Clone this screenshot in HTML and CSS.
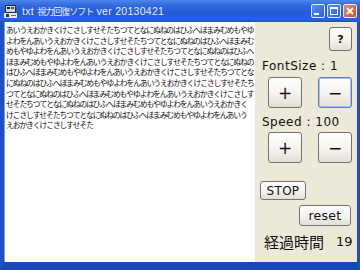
FILE: index.html
```html
<!DOCTYPE html>
<html lang="ja">
<head>
<meta charset="utf-8">
<title>txt 視力回復ソフト</title>
<link rel="stylesheet" href="styles.css">
</head>
<body>
<div class="window">
  <div class="titlebar">
    <svg class="appicon" width="14" height="15" viewBox="0 0 14 15">
      <rect x="1" y="1" width="11" height="8" fill="#2b2b2b"/>
      <rect x="2" y="2" width="9" height="6" fill="#c8d4e8"/>
      <rect x="3" y="3" width="3" height="2" fill="#222"/>
      <rect x="7" y="3" width="3" height="2" fill="#555"/>
      <rect x="0" y="9" width="13" height="5" fill="#e8e8e8"/>
      <rect x="2" y="10" width="3" height="3" fill="#333"/>
      <rect x="7" y="11" width="5" height="1" fill="#666"/>
    </svg>
    <span class="title">txt <span class="title-jp">視力回復ソフト</span> ver 20130421</span>
    <div class="controls">
      <span class="ctl ctl-min"><svg width="14" height="14" viewBox="0 0 14 14"><rect x="3" y="9" width="5" height="2" fill="#fff"/></svg></span>
      <span class="ctl ctl-max"><svg width="14" height="14" viewBox="0 0 14 14"><rect x="3.5" y="3.5" width="7" height="7" fill="none" stroke="#fff" stroke-width="1"/><rect x="3" y="3" width="8" height="2" fill="#fff"/></svg></span>
      <span class="ctl ctl-close"><svg width="14" height="14" viewBox="0 0 14 14"><path d="M4 4 L10 10 M10 4 L4 10" stroke="#fff" stroke-width="1.8"/></svg></span>
    </div>
  </div>
  <div class="frame">
    <div class="textbox">あいうえおかきくけこさしすせそたちつてとなにぬねのはひふへほまみむめもやゆ<br>よわをんあいうえおかきくけこさしすせそたちつてとなにぬねのはひふへほまみむ<br>めもやゆよわをんあいうえおかきくけこさしすせそたちつてとなにぬねのはひふへ<br>ほまみむめもやゆよわをんあいうえおかきくけこさしすせそたちつてとなにぬねの<br>はひふへほまみむめもやゆよわをんあいうえおかきくけこさしすせそたちつてとな<br>にぬねのはひふへほまみむめもやゆよわをんあいうえおかきくけこさしすせそたち<br>つてとなにぬねのはひふへほまみむめもやゆよわをんあいうえおかきくけこさしす<br>せそたちつてとなにぬねのはひふへほまみむめもやゆよわをんあいうえおかきく<br>けこさしすせそたちつてとなにぬねのはひふへほまみむめもやゆよわをんあいう<br>えおかきくけこさしすせそた</div>
    <div class="panel">
      <button class="btn btn-help">?</button>
      <div class="label label-font">FontSize : 1</div>
      <div class="pair pair-font">
        <button class="btn btn-sq">+</button>
        <button class="btn btn-sq btn-focus">−</button>
      </div>
      <div class="label label-speed">Speed : 100</div>
      <div class="pair pair-speed">
        <button class="btn btn-sq">+</button>
        <button class="btn btn-sq">−</button>
      </div>
      <button class="btn btn-stop">STOP</button>
      <button class="btn btn-reset">reset</button>
      <div class="elapsed"><span class="elapsed-jp">経過時間</span><span class="elapsed-num">19</span></div>
    </div>
  </div>
</div>
</body>
</html>
```

FILE: styles.css
```css
html, body {
  margin: 0;
  padding: 0;
}
body {
  width: 360px;
  height: 270px;
  overflow: hidden;
  background: #1a4cc4;
}
.window {
  width: 360px;
  height: 270px;
  display: flex;
  flex-direction: column;
}
.titlebar {
  height: 22px;
  flex: none;
  display: flex;
  align-items: center;
  background: linear-gradient(#4c86ea 0%, #2f69e0 25%, #2459d6 60%, #2a62dc 88%, #1e50c8 100%);
}
.appicon {
  margin-left: 4px;
  flex: none;
}
.title {
  margin-left: 4px;
  color: #e9eefa;
  font-family: "Liberation Sans", "Noto Sans CJK JP", sans-serif;
  font-size: 10.5px;
  letter-spacing: 0.3px;
}
.title-jp {
  font-family: "Noto Sans CJK JP", sans-serif;
  font-size: 9px;
  letter-spacing: -1px;
}
.controls {
  margin-left: auto;
  margin-right: 3px;
  display: flex;
  gap: 2px;
}
.ctl {
  width: 14px;
  height: 14px;
  border: 1px solid #e6ecfa;
  border-radius: 2px;
  box-sizing: border-box;
  display: flex;
  align-items: center;
  justify-content: center;
  background: linear-gradient(135deg, #5a8ef0, #2a62e0);
}
.ctl svg {
  flex: none;
}
.ctl-close {
  background: linear-gradient(135deg, #e88a6a, #d2502e);
}
.frame {
  flex: 1;
  display: flex;
  border-left: 4px solid #1f4fc0;
  border-right: 3px solid #1f4fc0;
  border-bottom: 8px solid #1848bc;
  min-height: 0;
}
.textbox {
  width: 251px;
  flex: none;
  background: #fff;
  border-left: 1px solid #7f9cd8;
  box-sizing: border-box;
  padding: 3px 0 0 1px;
  font-family: "Noto Sans CJK JP", sans-serif;
  font-size: 7.8px;
  letter-spacing: -1.1px;
  line-height: 10.6px;
  color: #111;
  white-space: nowrap;
  overflow: hidden;
}
.panel {
  flex: 1;
  background: #ece9d8;
  display: flex;
  flex-direction: column;
  align-items: flex-start;
  font-family: "DejaVu Sans", sans-serif;
  color: #111;
}
.btn {
  font-family: "DejaVu Sans", sans-serif;
  color: #111;
  border: 1px solid #6f7478;
  border-radius: 3px;
  background: linear-gradient(#ffffff, #f4f3ee 55%, #e2ded3);
  padding: 0;
  box-sizing: border-box;
  display: flex;
  align-items: center;
  justify-content: center;
}
.btn-help {
  align-self: flex-end;
  margin: 5px 5px 0 0;
  width: 23px;
  height: 24px;
  font-size: 11px;
  font-weight: bold;
}
.label {
  margin-left: 7px;
  font-size: 12px;
  letter-spacing: 0.5px;
  line-height: 14px;
}
.label-font {
  margin-top: 8px;
}
.label-speed {
  margin-top: 7px;
}
.pair {
  display: flex;
  gap: 16px;
  margin-left: 13px;
}
.pair-font {
  margin-top: 4px;
}
.pair-speed {
  margin-top: 3px;
}
.btn-sq {
  width: 34px;
  height: 31px;
  font-size: 17px;
}
.btn-focus {
  border-color: #5b7fc4;
  box-shadow: inset 0 0 0 1px #a8c2ec;
}
.btn-stop {
  margin: 18px 0 0 5px;
  width: 46px;
  height: 19px;
  font-size: 12px;
  letter-spacing: 0.3px;
}
.btn-reset {
  margin: 5px 0 0 44px;
  width: 52px;
  height: 21px;
  font-size: 12.5px;
  letter-spacing: 0.3px;
}
.elapsed {
  margin: 7px 0 0 9px;
  display: flex;
  align-items: center;
  line-height: 18px;
}
.elapsed-jp {
  font-family: "Noto Sans CJK JP", sans-serif;
  font-size: 15px;
}
.elapsed-num {
  margin-left: 12px;
  font-family: "DejaVu Sans", sans-serif;
  font-size: 13px;
}
```
